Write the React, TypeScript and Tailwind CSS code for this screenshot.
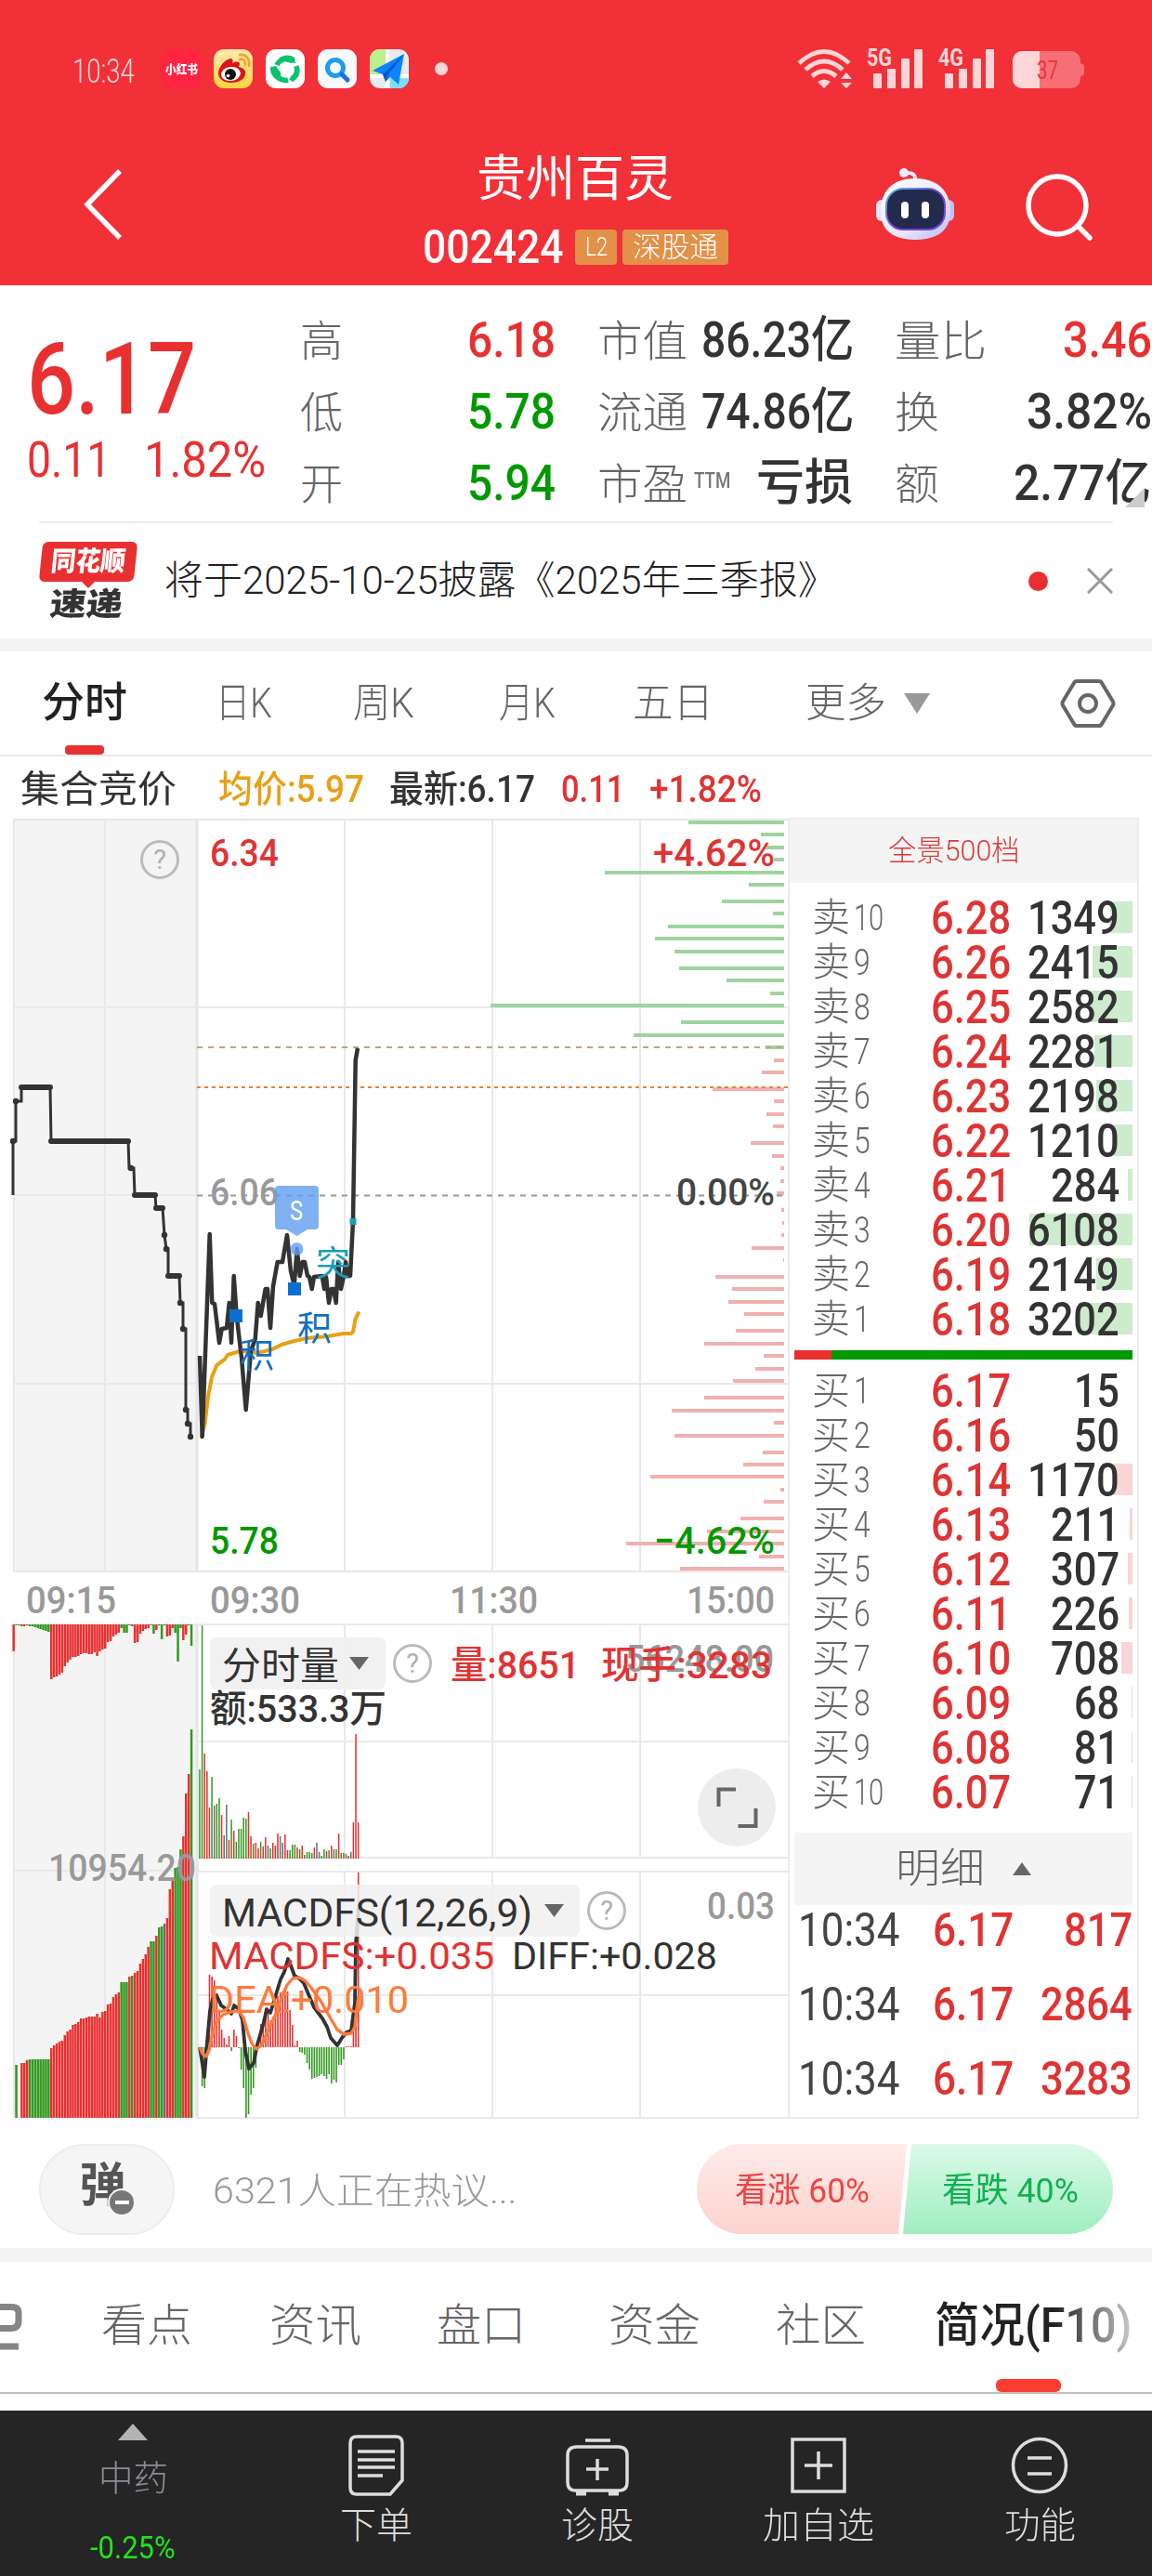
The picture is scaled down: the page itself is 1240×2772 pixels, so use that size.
import React, { useLayoutEffect, useRef, useState } from "react";

// squeezes its text to the width of the box
const Fit = ({ className, children }: { className: string; children: React.ReactNode }) => {
  const box = useRef<HTMLSpanElement>(null);
  const text = useRef<HTMLSpanElement>(null);
  const [scale, setScale] = useState(1);
  useLayoutEffect(() => {
    if (box.current && text.current) {
      setScale(box.current.clientWidth / text.current.offsetWidth);
    }
  }, [children]);
  return (
    <span ref={box} className={`flex shrink-0 leading-none ${className}`}>
      <span
        ref={text}
        className="shrink-0 origin-left whitespace-nowrap"
        style={{ transform: `scaleX(${scale})` }}
      >
        {children}
      </span>
    </span>
  );
};

const StatusBar = () => (
  <div className="flex h-[148px] items-center pl-[78px]">
    <Fit className="w-[67px] text-[37px] font-light text-[#fcd5d7] pt-1">10:34</Fit>
    <div className="ml-[29px] flex gap-[14px]">
      <div className="flex h-[42px] w-[42px] items-center justify-center rounded-xl bg-[#ff2442]">
        <Fit className="w-[35px] text-[13px] font-black text-white">小红书</Fit>
      </div>
      <svg className="h-[42px] w-[42px]" viewBox="0 0 42 42">
        <defs>
          <linearGradient id="wb" x1="0" y1="0" x2="0" y2="1">
            <stop offset="0" stopColor="#ffe9b0" />
            <stop offset="1" stopColor="#ffd23c" />
          </linearGradient>
        </defs>
        <rect width="42" height="42" rx="11" fill="url(#wb)" />
        <path d="M5 26C5 19 12 11 18 10c3 0 3 3 2 5 4-2 8-2 8 1l-1 3c5 1 8 4 7 8-1 6-8 9-15 9C11 36 5 32 5 26z" fill="#dd1416" />
        <ellipse cx="18.500" cy="26.500" rx="10.500" ry="7.500" fill="#fff" transform="rotate(-8 18.500 26.500)" />
        <circle cx="18" cy="27" r="6" fill="#111" />
        <circle cx="15.500" cy="28.500" r="1.800" fill="#fff" />
        <path d="M28 11c4-1 6 2 6 6M28 6c7-1 11 4 10 12" fill="none" stroke="#f0a52c" strokeWidth="2.600" strokeLinecap="round" />
      </svg>
      <svg className="h-[42px] w-[42px]" viewBox="0 0 42 42">
        <rect width="42" height="42" rx="11" fill="#fff" />
        <g fill="none" stroke="#0ac36f" strokeWidth="5.500">
          <path d="M12 17A11 11 0 0 1 29 13" />
          <path d="M33 18A12.500 12.500 0 0 1 28 32" />
          <path d="M24 33A12 12 0 0 1 9 22" />
        </g>
        <g fill="#0ac36f">
          <path d="M14 10C18 6 26 5 31 9l1 6-8-1zM36 19c2 6-1 13-7 16l-4-3 6-5zM5 19l6-1 5 7 1 9C9 33 4 26 5 19z" />
        </g>
      </svg>
      <svg className="h-[42px] w-[42px]" viewBox="0 0 42 42">
        <rect width="42" height="42" rx="11" fill="#f8f9fb" />
        <circle cx="19" cy="20" r="8.500" fill="none" stroke="#1e9bf5" strokeWidth="5" />
        <path d="M26 27l6 6" stroke="#1a6fe8" strokeWidth="5" strokeLinecap="round" />
      </svg>
      <svg className="h-[42px] w-[42px]" viewBox="0 0 42 42">
        <defs>
          <clipPath id="map">
            <rect width="42" height="42" rx="11" />
          </clipPath>
        </defs>
        <g clipPath="url(#map)">
          <rect width="42" height="42" fill="#e6ecef" />
          <path d="M0 0h17v27H0z" fill="#bdf08d" />
          <path d="M22 31h20v11H22z" fill="#7fdcff" />
          <path d="M17 0h4v42h-4zM0 27h42v4H0z" fill="#fff" />
          <path d="M37 5L3 23l11 4 3 8 5-5 9 8z" fill="#0a84ff" />
          <path d="M37 5L14 27l3 8 3-8z" fill="#0058c8" />
        </g>
      </svg>
    </div>
    <div className="ml-[28px] h-[14px] w-[14px] rounded-full bg-[#fcd5d7]" />
    <svg className="ml-[376px] h-[60px] w-[310px]" viewBox="858 44 310 60">
      <g fill="none" stroke="#fcd5d7" strokeWidth="5">
        <path d="M860 68Q887 43 914 68" />
        <path d="M867 75Q887 57 907 75" />
        <path d="M874 82Q887 71 900 82" />
      </g>
      <g fill="#fcd5d7">
        <path d="M880 88q7-5 14 0l-7 7zM905 85l6-7 6 7zM905 89h12l-6 6z" />
        <rect x="940" y="79" width="9" height="16" rx="1" />
        <rect x="955" y="74" width="9" height="21" rx="1" />
        <rect x="970" y="63" width="9" height="32" rx="1" />
        <rect x="984" y="53" width="9" height="42" rx="1" />
        <rect x="1017" y="79" width="9" height="16" rx="1" />
        <rect x="1032" y="74" width="9" height="21" rx="1" />
        <rect x="1047" y="63" width="9" height="32" rx="1" />
        <rect x="1061" y="53" width="9" height="42" rx="1" />
        <text x="933" y="71" textLength="27" lengthAdjust="spacingAndGlyphs" fontSize="26" fontWeight="700">5G</text>
        <text x="1010" y="71" textLength="27" lengthAdjust="spacingAndGlyphs" fontSize="26" fontWeight="700">4G</text>
      </g>
      <rect x="1090" y="55" width="73" height="40" rx="10" fill="#f76f75" />
      <path d="M1163 68q4 1 4 4v6q0 4-4 4z" fill="#f76f75" />
      <path d="M1119 55h-19a10 10 0 0 0-10 10v20a10 10 0 0 0 10 10h19z" fill="#fcd5d7" />
      <text x="1116" y="85" textLength="23" lengthAdjust="spacingAndGlyphs" fontSize="28" fill="#e8363e">37</text>
    </svg>
  </div>
);

const Header = () => (
  <div className="flex h-[159px]">
    <svg className="ml-[86px] mt-[33px] h-[80px] w-[48px]" viewBox="0 0 48 80" fill="none" stroke="#fff" strokeWidth="5.500">
      <path d="M43 3L8 39l35 36" />
    </svg>
    <div className="ml-[323px] w-[328px]">
      <Fit className="ml-[56px] mt-[19px] w-[212px] text-[53px] text-white">贵州百灵</Fit>
      <div className="mt-[21px] flex items-center">
        <Fit className="-ml-[2px] h-[50px] w-[152px] text-[50px] font-medium text-white">002424</Fit>
        <div className="ml-[12px] flex h-[38px] w-[45px] items-center justify-center rounded bg-[#e39048]">
          <Fit className="w-[24px] text-[28px] font-light text-white">L2</Fit>
        </div>
        <div className="ml-[6px] flex h-[38px] w-[114px] items-center justify-center rounded bg-[#e39048]">
          <Fit className="w-[92px] text-[30px] font-light text-white">深股通</Fit>
        </div>
      </div>
    </div>
    <svg className="ml-[155px] mt-[30px] h-[84px] w-[90px]" viewBox="940 178 90 84">
      <defs>
        <linearGradient id="face" x1="0" y1="0" x2="1" y2="1">
          <stop offset="0" stopColor="#fff" />
          <stop offset="0.600" stopColor="#e9e8fb" />
          <stop offset="1" stopColor="#b9b8ee" />
        </linearGradient>
        <linearGradient id="rim" x1="0" y1="0" x2="1" y2="1">
          <stop offset="0" stopColor="#5fc4e8" />
          <stop offset="0.500" stopColor="#7a3fd8" />
          <stop offset="1" stopColor="#6a4be0" />
        </linearGradient>
      </defs>
      <path d="M974 186q13-1 11 9" fill="none" stroke="#e4e4f6" strokeWidth="4" />
      <circle cx="973" cy="186" r="5" fill="#eeeefa" />
      <rect x="943" y="215" width="14" height="23" rx="6" fill="#e2e2f8" />
      <rect x="1013" y="215" width="14" height="23" rx="6" fill="#c3c2ee" />
      <path d="M948 228c0-24 14-36 37-36s38 12 38 36c0 21-16 30-38 30s-37-9-37-30z" fill="url(#face)" />
      <rect x="954" y="203" width="63" height="44" rx="18" fill="#232b4c" stroke="url(#rim)" strokeWidth="2" />
      <rect x="970" y="217" width="8" height="18" rx="4" fill="#fff" />
      <rect x="992" y="217" width="8" height="18" rx="4" fill="#fff" />
    </svg>
    <svg className="ml-[72px] mt-[34px] h-[80px] w-[80px]" viewBox="1104 182 80 80" fill="none" stroke="#fff" strokeWidth="5.500">
      <circle cx="1140" cy="221" r="31" />
      <path d="M1162 243l13 13" strokeLinecap="round" />
    </svg>
  </div>
);

const Quote = () => (
  <div className="flex h-[254px] pt-[21px]">
    <div className="w-[323px] pl-[29px]">
      <Fit className="mt-[27px] w-[182px] text-[107px] font-medium text-[#e93030]">6.17</Fit>
      <div className="mt-[7px] flex">
        <Fit className="w-[90px] text-[53px] text-[#e93030]">0.11</Fit>
        <Fit className="ml-[36px] w-[131px] text-[53px] text-[#e93030]">1.82%</Fit>
      </div>
    </div>
    <div className="w-[320px] text-[53px] font-medium text-[#009900]">
      <div className="flex h-[77px] items-center">
        <Fit className="w-[46px] text-[46px] font-light text-[#666]">高</Fit>
        <Fit className="ml-[134px] w-[95px] text-[#e93030]">6.18</Fit>
      </div>
      <div className="flex h-[77px] items-center">
        <Fit className="w-[46px] text-[46px] font-light text-[#666]">低</Fit>
        <Fit className="ml-[134px] w-[95px]">5.78</Fit>
      </div>
      <div className="flex h-[77px] items-center">
        <Fit className="w-[46px] text-[46px] font-light text-[#666]">开</Fit>
        <Fit className="ml-[134px] w-[95px]">5.94</Fit>
      </div>
    </div>
    <div className="w-[320px] text-[53px] font-medium text-[#333]">
      <div className="flex h-[77px] items-center">
        <Fit className="w-[97px] text-[46px] font-light text-[#666]">市值</Fit>
        <Fit className="ml-[15px] w-[164px]">86.23亿</Fit>
      </div>
      <div className="flex h-[77px] items-center">
        <Fit className="w-[97px] text-[46px] font-light text-[#666]">流通</Fit>
        <Fit className="ml-[15px] w-[164px]">74.86亿</Fit>
      </div>
      <div className="flex h-[77px] items-center">
        <Fit className="w-[97px] text-[46px] font-light text-[#666]">市盈</Fit>
        <Fit className="mb-2 ml-[7px] w-[39px] text-[24px] text-[#777]">TTM</Fit>
        <Fit className="ml-[28px] w-[104px] text-[53px]">亏损</Fit>
      </div>
    </div>
    <div className="relative w-[277px] text-[53px] font-medium text-[#333]">
      <div className="flex h-[77px] items-center">
        <Fit className="w-[99px] text-[46px] font-light text-[#666]">量比</Fit>
        <Fit className="ml-[82px] w-[96px] text-[#e93030]">3.46</Fit>
      </div>
      <div className="flex h-[77px] items-center">
        <Fit className="w-[48px] text-[46px] font-light text-[#666]">换</Fit>
        <Fit className="ml-[94px] w-[135px]">3.82%</Fit>
      </div>
      <div className="flex h-[77px] items-center">
        <Fit className="w-[48px] text-[46px] font-light text-[#666]">额</Fit>
        <Fit className="ml-[80px] w-[148px]">2.77亿</Fit>
      </div>
      <svg className="absolute bottom-[15px] right-[8px] h-[21px] w-[21px]" viewBox="0 0 21 21">
        <path d="M21 0v21H0z" fill="#ccc" />
      </svg>
    </div>
  </div>
);

const News = () => (
  <div className="mx-[42px] flex h-[126px] items-center border-t-2 border-[#ebebeb]">
    <div className="w-[104px] pl-[2px]">
      <div className="flex h-[43px] -skew-x-6 items-center justify-center rounded-md bg-[#e93030]">
        <Fit className="w-[80px] text-[29px] font-black text-white">同花顺</Fit>
      </div>
      <svg className="mx-auto h-[7px] w-[14px]" viewBox="0 0 14 7">
        <path d="M0 0h14L7 7z" fill="#e93030" />
      </svg>
      <Fit className="ml-[10px] w-[78px] -skew-x-6 text-[34px] font-black text-[#333]">速递</Fit>
    </div>
    <Fit className="ml-[31px] w-[724px] text-[42px] font-light text-[#222]">将于2025-10-25披露《2025年三季报》</Fit>
    <div className="ml-[206px] h-[21px] w-[21px] rounded-full bg-[#e93030]" />
    <svg className="ml-[42px] h-[28px] w-[28px]" viewBox="0 0 28 28" stroke="#999" strokeWidth="3">
      <path d="M1 1l26 26M27 1L1 27" />
    </svg>
  </div>
);

const PeriodTabs = () => (
  <div className="flex h-[113px] border-b-2 border-[#e8e8e8] pl-[45px] text-[44px] font-light text-[#666]">
    <div className="flex flex-col">
      <Fit className="mt-[33px] h-[68px] w-[92px] text-[45px] font-medium text-[#222]">分时</Fit>
      <div className="ml-[25px] h-[10px] w-[42px] rounded bg-[#e93030]" />
    </div>
    <Fit className="ml-[95px] mt-[34px] w-[61px]">日K</Fit>
    <Fit className="ml-[87px] mt-[34px] w-[66px]">周K</Fit>
    <Fit className="ml-[91px] mt-[34px] w-[61px]">月K</Fit>
    <Fit className="ml-[83px] mt-[34px] w-[87px]">五日</Fit>
    <Fit className="ml-[99px] mt-[34px] w-[87px]">更多</Fit>
    <svg className="ml-[19px] mt-[45px] h-[22px] w-[28px]" viewBox="0 0 28 22">
      <path d="M0 0h28L14 22z" fill="#999" />
    </svg>
    <svg className="ml-[140px] mt-[29px] h-[54px] w-[60px]" viewBox="0 0 60 54" fill="none" stroke="#666" strokeWidth="4">
      <path d="M18 3h24q2 0 3 2l12 20q1 2 0 4L45 49q-1 2-3 2H18q-2 0-3-2L3 29q-1-2 0-4L15 5q1-2 3-2z" />
      <circle cx="30" cy="27" r="9" />
    </svg>
  </div>
);

const PriceInfo = () => (
  <div className="flex h-[66px] items-center pl-[22px] pt-[5px] text-[40px] text-[#333]">
    <Fit className="w-[168px]">集合竞价</Fit>
    <Fit className="ml-[45px] w-[157px] font-medium text-[#e8a016]">均价:5.97</Fit>
    <Fit className="ml-[27px] w-[157px] font-medium">最新:6.17</Fit>
    <Fit className="ml-[28px] w-[68px] font-medium text-[#e03333]">0.11</Fit>
    <Fit className="ml-[27px] w-[121px] font-medium text-[#e03333]">+1.82%</Fit>
  </div>
);

const RED = "#e83030";
const GREEN = "#339922";
const GRAY = "#6b6b73";
const colors: any = { r: RED, g: GREEN, k: GRAY };

// [y, left end] of every resting order
const asks = [
  [884, 741], [897, 819], [911, 824], [924, 833], [938, 651], [951, 806], [969, 777], [982, 832], [996, 719],
  [1009, 705], [1023, 726], [1041, 731], [1054, 782], [1068, 829], [1081, 528], [1099, 733], [1113, 682], [1126, 824],
];
const bids = [
  [1140, 833], [1153, 820], [1171, 767], [1184, 833], [1198, 825], [1211, 832], [1229, 808], [1243, 831], [1256, 840],
  [1270, 840], [1283, 836], [1301, 841], [1315, 842], [1328, 841], [1342, 809], [1355, 843], [1373, 770], [1386, 788],
  [1400, 784], [1413, 801], [1431, 792], [1445, 758], [1458, 822], [1472, 813], [1485, 789], [1503, 758], [1517, 723],
  [1530, 833], [1544, 726], [1562, 821], [1575, 800], [1588, 700], [1602, 840], [1615, 822], [1633, 797], [1647, 761],
  [1660, 674], [1674, 817], [1687, 732],
];

const auctionPoints =
  "14,1285 14,1227 17,1227 17,1184 23,1184 23,1169 54,1169 55,1227 138,1227 139,1256 144,1256 145,1285 167,1285 168,1299 175,1299 177,1328 179,1343 181,1343 181,1372 193,1372 194,1401 197,1401 197,1429 200,1429 200,1516 202,1516 202,1531 205,1531 205,1545";
const auctionDots = [
  [14, 1227], [17, 1184], [141, 1256], [177, 1328], [179, 1343], [194, 1401], [197, 1429], [200, 1516], [202, 1531], [205, 1545],
];
const pricePoints =
  "215,1458 217.7,1545 225.7,1327 228.3,1401 231,1402 236,1444 238.7,1429 244,1428 246.7,1401 249,1444 251.7,1372 254.7,1415 260,1460 264.7,1516 270,1453 274.7,1440 277.7,1401 280.7,1415 285.7,1386 288,1386 291,1428 294,1383 298.7,1357 304,1357 309,1328 313,1367 316.7,1382 319.7,1343 322.7,1372 325.7,1357 328,1357 331,1372 333,1373 335.7,1386 338,1373 346.7,1372 349,1386 351,1373 354,1401 356.7,1386 359,1386 361.7,1401 364,1357 367,1386 370,1372 372,1357 374.7,1372 377,1372 380,1313 382.7,1140 385,1127";
const avgPoints =
  "217,1545 220.7,1530 224.3,1500 228.3,1480 233.3,1468 241.7,1462 245,1457 255,1454 260,1452 267,1454 276.7,1455 293,1451 303,1446 313,1443 330,1439 353,1437 370,1434 378,1434 380,1432 382.7,1418 385.7,1412";
const diffPoints =
  "215,2202 220,2234 223,2196 226,2163 229,2150 233,2146 238,2157 245,2162 249,2166 252,2157 257,2161 261,2173 264,2206 268,2225 273,2219 277,2199 284,2175 287,2161 291,2165 295,2152 302,2129 306,2121 310,2107 313,2114 317,2125 322,2128 327,2133 332,2145 338,2159 347,2171 352,2180 356,2192 363,2200 368,2192 373,2186 378,2184 382,2154 383,2091 386,2052";
const deaPoints =
  "215,2202 218,2209 222,2212 225,2205 228,2191 233,2175 240,2167 248,2164 257,2163 262,2170 266,2184 271,2198 276,2204 282,2199 288,2185 297,2166 303,2149 309,2135 315,2128 322,2127 328,2130 335,2138 345,2152 357,2173 363,2183 370,2188 378,2187 382,2180 384,2161 386,2147";

const unmatched =
  "r29 g1 g1 r2 r2 r1 g2 g2 g3 g4 g5 g6 g7 g8 r59 r57 r56 r54 r52 r45 r41 r38 r35 r35 r34 r32 r31 r31 r32 r32 r30 r34 r29 r27 r26 r19 r18 r13 r11 r9 g4 g9 g9 r1 g2 r20 r19 r10 r7 r5 r4 g1 g10 r6 g1 g16 r1 r13 r12 r4 g9 g40 g4 r17 r11 g1 g23";
const matched =
  "g0 g57 r0 r59 r59 r62 g63 g63 g63 g63 g63 g63 g63 g63 r75 r78 r80 r82 r83 r89 r93 r95 r100 r101 r103 r107 r107 r108 r109 r109 r109 r112 r108 r114 r115 r122 r123 r130 r133 r135 g146 g146 g146 r152 g153 r156 r158 r166 r171 r176 r184 g190 g190 r196 g205 g206 k209 r215 r246 r255 g269 g270 g289 r303 r349 r370 g418";
const volume =
  "g96 g251 r113 r94 r55 g88 k57 g59 g65 r47 k25 k58 r20 g42 r30 g18 g32 g32 g44 g43 r50 r24 g16 r17 r11 g18 r13 r23 k14 g11 r17 r14 r27 k24 k17 r26 r9 g9 g15 g15 r12 g10 r14 k4 g7 g7 g6 r12 k17 k7 g3 g10 r8 g9 r14 k10 g10 r27 g6 r6 g5 r3 k7 r39 r134 r39";
const macd = [
  0, -42, -44, 1, 78, 76, 72, 58, 40, 19, 10, 3, 12, -4, 19, 12, -1, -24, -44, -76, -72, -51, -44, -22, 6, 25, 30, 38,
  37, 29, 33, 45, 55, 59, 60, 62, 60, 40, 24, 2, 7, -5, -6, -8, -17, -24, -34, -33, -32, -31, -29, -31, -34, -29, -39,
  -35, -38, -19, -19, -13, 1, 1, 1, 40, 90, 188,
];

const parse = (s: string) => s.split(" ").map((v) => ({ fill: colors[v[0]], h: Number(v.slice(1)) }));

type LabelProps = { x: number; y: number; w: number; size?: number; fill: string; weight?: number; children: string };
const Label = ({ x, y, w, size = 41, fill, weight = 500, children }: LabelProps) => (
  <text x={x} y={y} textLength={w} lengthAdjust="spacingAndGlyphs" fontSize={size} fontWeight={weight} fill={fill}>
    {children}
  </text>
);

const Help = ({ x, y }: { x: number; y: number }) => (
  <g>
    <circle cx={x} cy={y} r="19.500" fill="none" stroke="#bbb" strokeWidth="3" />
    <text x={x} y={y + 10} textAnchor="middle" fontSize="29" fill="#b0b0b0">?</text>
  </g>
);

const Chart = () => (
  <svg className="h-[1401px] w-[848px] shrink-0" viewBox="0 879 848 1401">
    <rect x="15" y="881" width="195" height="809" fill="#f4f4f4" />
    <rect x="15" y="1747" width="195" height="531" fill="#f4f4f4" />
    <g stroke="#e9e9e9" strokeWidth="2" fill="none">
      <path d="M15 881V1690M113 881V1690M371 881V1690M530 881V1690M689 881V1690" />
      <path d="M15 1083H848M15 1488H848M15 1285H212" />
      <path d="M14 881H848M14 1690H848" strokeWidth="2.500" />
      <path d="M212 881V1690M212 1747V2278" stroke="#e6e6e6" strokeWidth="3.500" />
      <path d="M15 1747V2278M113 1747V2278M371 1747V1998M530 1747V1998M689 1747V1998M371 2013V2278M530 2013V2278M689 2013V2278" />
      <path d="M14 1747H848M212 1873H848M212 1998H848M15 2012H212M212 2013H848M212 2146H848M212 2278H848" />
    </g>

    {asks.map(([y, x]) => (
      <rect key={y} x={x} y={y - 2} width={844 - x} height="4" fill="#9fd49f" />
    ))}
    {bids.map(([y, x]) => (
      <rect key={y} x={x} y={y - 2} width={844 - x} height="4" fill="#f1b0b0" />
    ))}
    <path d="M212 1126H844" stroke="#b8a880" strokeWidth="2" strokeDasharray="6 6" />
    <path d="M212 1169H848" stroke="#ee8030" strokeWidth="2" strokeDasharray="4 4" />
    <path d="M212 1285.500H844" stroke="#999" strokeWidth="2" strokeDasharray="6 6" />

    <Label x={226} y={1296} w={74} fill="#999">6.06</Label>
    <Label x={728} y={1296} w={106} fill="#444">0.00%</Label>

    <polyline points={auctionPoints} fill="none" stroke="#333" strokeWidth="3" />
    <path d="M23 1169H54M55 1227H138M145 1285H167M168 1299H175M181 1372H193" stroke="#333" strokeWidth="6" strokeLinecap="round" />
    {auctionDots.map(([x, y]) => (
      <circle key={y} cx={x} cy={y} r="3.200" fill="#333" />
    ))}
    <polyline points={avgPoints} fill="none" stroke="#e8a016" strokeWidth="4" strokeLinejoin="round" strokeLinecap="round" />
    <polyline points={pricePoints} fill="none" stroke="#333" strokeWidth="4.500" strokeLinejoin="round" />

    <rect x="247" y="1408" width="14" height="14" fill="#0a70cf" />
    <rect x="310" y="1379" width="14" height="14" fill="#0a70cf" />
    <rect x="376.500" y="1310" width="7" height="7" fill="#1a9cb8" />
    <g fill="#5f9df0" fillOpacity="0.800">
      <path d="M300 1275h39q4 0 4 4v39q0 4-4 4h-8l-11.500 7-11.500-7h-8q-4 0-4-4v-39q0-4 4-4z" />
      <circle cx="319.500" cy="1343" r="7" />
    </g>
    <Label x={312} y={1312} w={14} size={29} weight={400} fill="#fff">S</Label>
    <g fontSize="37" fontWeight="400">
      <text x="258" y="1471" fill="#1070c0">积</text>
      <text x="320" y="1442" fill="#1070c0">积</text>
      <text x="340" y="1372" fill="#1a9cb8">突</text>
    </g>

    <Label x={226} y={931} w={74} fill="#e03333">6.34</Label>
    <Label x={703} y={931} w={131} fill="#e03333">+4.62%</Label>
    <Label x={226} y={1671} w={74} fill="#009900">5.78</Label>
    <Label x={704} y={1671} w={130} fill="#009900">−4.62%</Label>
    <Help x={172} y={924} />

    <Label x={28} y={1735} w={97} fill="#999">09:15</Label>
    <Label x={226} y={1735} w={97} fill="#999">09:30</Label>
    <Label x={484} y={1735} w={95} fill="#999">11:30</Label>
    <Label x={739} y={1735} w={95} fill="#999">15:00</Label>

    {parse(unmatched).map((b, i) => (
      <rect key={i} x={13.4 + i * 2.9} y="1747" width="2.500" height={b.h} fill={b.fill} />
    ))}
    {parse(matched).map((b, i) => (
      <rect key={i} x={13.4 + i * 2.9} y={2278 - b.h} width="2.500" height={b.h} fill={b.fill} />
    ))}
    <Label x={52} y={2023} w={159} fill="#999">10954.20</Label>

    {parse(volume).map((b, i) => (
      <rect key={i} x={214.2 + i * 2.626} y={1999 - b.h} width="1.500" height={b.h} fill={b.fill} />
    ))}
    <rect x="226" y="1761" width="189" height="56" rx="7" fill="#f0f0f0" fillOpacity="0.920" />
    <Label x={239} y={1806} w={126} fill="#333" weight={400}>分时量</Label>
    <path d="M376 1782h21l-10.500 14z" fill="#666" />
    <Help x={444} y={1789} />
    <Label x={673} y={1798} w={160} fill="#999">56248.00</Label>
    <Label x={485} y={1805} w={139} fill="#e03333">量:8651</Label>
    <Label x={647} y={1805} w={184} fill="#e03333">现手:3283</Label>
    <Label x={226} y={1852} w={190} fill="#333">额:533.3万</Label>
    <circle cx="793" cy="1944" r="42" fill="#ededed" />
    <path d="M792 1924.500H773.500V1943M794.500 1964H813.500V1945" fill="none" stroke="#666" strokeWidth="4" />

    {macd.map((h, i) => (
      <rect
        key={i}
        x={214.2 + i * 2.626}
        y={h > 0 ? 2202 - h : 2202}
        width="1.600"
        height={Math.abs(h)}
        fill={h > 0 ? RED : GREEN}
      />
    ))}
    <polyline points={diffPoints} fill="none" stroke="#333" strokeWidth="3.800" strokeLinejoin="round" />
    <polyline points={deaPoints} fill="none" stroke="#ff7a3c" strokeWidth="3.400" strokeLinejoin="round" />
    <rect x="226" y="2027" width="398" height="56" rx="7" fill="#f0f0f0" fillOpacity="0.850" />
    <Label x={239} y={2072} w={334} size={43} fill="#333" weight={400}>MACDFS(12,26,9)</Label>
    <path d="M586 2048h21l-10.500 14z" fill="#666" />
    <Help x={653} y={2055} />
    <Label x={761} y={2064} w={73} fill="#999">0.03</Label>
    <Label x={225} y={2118} w={307} weight={400} fill="#e03333">MACDFS:+0.035</Label>
    <Label x={551} y={2118} w={221} weight={400} fill="#333">DIFF:+0.028</Label>
    <Label x={225} y={2165} w={215} weight={400} fill="#ff7a3c">DEA:+0.010</Label>
  </svg>
);

const sells = [
  ["10", "6.28", "1349", 24],
  ["9", "6.26", "2415", 43],
  ["8", "6.25", "2582", 45],
  ["7", "6.24", "2281", 41],
  ["6", "6.23", "2198", 39],
  ["5", "6.22", "1210", 20],
  ["4", "6.21", "284", 5],
  ["3", "6.20", "6108", 111],
  ["2", "6.19", "2149", 39],
  ["1", "6.18", "3202", 58],
];
const buys = [
  ["1", "6.17", "15", 0],
  ["2", "6.16", "50", 0],
  ["3", "6.14", "1170", 21],
  ["4", "6.13", "211", 3],
  ["5", "6.12", "307", 5],
  ["6", "6.11", "226", 4],
  ["7", "6.10", "708", 12],
  ["8", "6.09", "68", 1],
  ["9", "6.08", "81", 1],
  ["10", "6.07", "71", 1],
];
const ticks = [
  ["10:34", "6.17", "817"],
  ["10:34", "6.17", "2864"],
  ["10:34", "6.17", "3283"],
];

const qtyWidth: any = { 2: "w-[49px]", 3: "w-[74px]", 4: "w-[99px]" };

const Level = ({ side, row, bar }: { side: string; row: any[]; bar: string }) => (
  <div className="relative flex h-[48px] items-center pl-[24px] text-[50px] font-medium">
    <div className={`absolute right-[5px] top-[6px] h-[34px] ${bar}`} style={{ width: row[3] }} />
    <Fit className="w-[41px] text-[42px] font-light text-[#666]">{side}</Fit>
    <Fit className={`ml-[4px] text-[39px] font-light text-[#666] ${row[0] === "10" ? "w-[32px]" : "w-[18px]"}`}>{row[0]}</Fit>
    <div className={row[0] === "10" ? "ml-[51px]" : "ml-[65px]"}>
      <Fit className="w-[86px] text-[#e03333]">{row[1]}</Fit>
    </div>
    <div className="relative ml-auto mr-[19px]">
      <Fit className={`text-[#333] ${qtyWidth[row[2].length]}`}>{row[2]}</Fit>
    </div>
  </div>
);

const OrderBook = () => (
  <div className="h-[1400px] w-[378px] border-2 border-t border-[#ececec]">
    <div className="flex h-[69px] items-center bg-[#f4f4f4] pl-[106px]">
      <Fit className="w-[142px] text-[31px] font-light text-[#d83a3a]">全景500档</Fit>
    </div>
    <div className="mt-[14px]">
      {sells.map((row) => (
        <Level key={row[0]} side="卖" row={row} bar="bg-[#cdebcd]" />
      ))}
    </div>
    <div className="ml-[5px] mr-[5px] mt-[9px] flex h-[10px] bg-[#009900]">
      <div className="w-[40px] bg-[#e93030]" />
    </div>
    <div className="mt-[10px]">
      {buys.map((row) => (
        <Level key={row[0]} side="买" row={row} bar="bg-[#f9d5d5]" />
      ))}
    </div>
    <div className="mx-[5px] mt-[19px] flex h-[78px] items-center bg-[#f4f4f4] pl-[109px]">
      <Fit className="w-[96px] text-[44px] font-light text-[#666]">明细</Fit>
      <svg className="ml-[30px] h-[14px] w-[20px]" viewBox="0 0 20 14">
        <path d="M10 0l10 14H0z" fill="#666" />
      </svg>
    </div>
    <div className="-mt-[13px]">
      {ticks.map((t, i) => (
        <div key={i} className="flex h-[80px] items-center pl-[9px] pr-[5px] text-[50px] font-medium text-[#e03333]">
          <Fit className="w-[110px] font-normal text-[#444]">{t[0]}</Fit>
          <Fit className="ml-[35px] w-[87px]">{t[1]}</Fit>
          <div className="ml-auto">
            <Fit className={qtyWidth[t[2].length]}>{t[2]}</Fit>
          </div>
        </div>
      ))}
    </div>
  </div>
);

const Comments = () => (
  <div className="flex h-[139px] items-start pl-[42px] pt-[27px]">
    <div className="relative flex h-[98px] w-[146px] items-center justify-center rounded-full border-2 border-[#ededed] bg-[#f5f5f5]">
      <Fit className="mb-2 mr-[9px] w-[50px] text-[50px] font-bold text-[#555]">弹</Fit>
      <div className="absolute left-[72px] top-[46px] flex h-[30px] w-[30px] items-center justify-center rounded-full border-2 border-[#f5f5f5] bg-[#777]">
        <div className="h-[4px] w-[15px] bg-white" />
      </div>
    </div>
    <Fit className="ml-[41px] mt-[32px] w-[328px] text-[39px] font-light text-[#999]">6321人正在热议...</Fit>
    <div className="relative ml-[193px] h-[97px] w-[448px]">
      <svg className="absolute inset-0 h-[97px] w-[448px]" viewBox="0 0 448 97">
        <defs>
          <linearGradient id="up" x1="0" y1="0" x2="0" y2="1">
            <stop offset="0" stopColor="#feecea" />
            <stop offset="1" stopColor="#fdd3ce" />
          </linearGradient>
          <linearGradient id="down" x1="0" y1="0" x2="0" y2="1">
            <stop offset="0" stopColor="#dbfae8" />
            <stop offset="1" stopColor="#9fedc0" />
          </linearGradient>
        </defs>
        <path d="M48.500 0H226L217 97H48.500A48.500 48.500 0 0 1 48.500 0z" fill="url(#up)" />
        <path d="M231 0H399.500A48.500 48.500 0 0 1 399.500 97H222z" fill="url(#down)" />
      </svg>
      <div className="relative flex h-[97px] items-center pl-[41px] pt-[4px]">
        <Fit className="w-[145px] text-[37px] text-[#ee4444]">看涨 60%</Fit>
        <Fit className="ml-[78px] w-[147px] text-[37px] text-[#12b052]">看跌 40%</Fit>
      </div>
    </div>
  </div>
);

const InfoTabs = () => (
  <div className="flex h-[142px] border-b-2 border-[#bfbfbf] text-[48px] font-light text-[#666]">
    <svg className="mt-[44px] h-[52px] w-[26px]" viewBox="0 0 26 52" fill="none" stroke="#858585" strokeWidth="7">
      <path d="M-4 4.500h17q7 0 7 7v8q0 8-9 8H-4M-4 47h24" />
    </svg>
    <Fit className="ml-[83px] mt-[45px] w-[98px]">看点</Fit>
    <Fit className="ml-[83px] mt-[45px] w-[99px]">资讯</Fit>
    <Fit className="ml-[81px] mt-[45px] w-[96px]">盘口</Fit>
    <Fit className="ml-[89px] mt-[45px] w-[99px]">资金</Fit>
    <Fit className="ml-[81px] mt-[45px] w-[97px]">社区</Fit>
    <div className="ml-[74px]">
      <Fit className="mt-[43px] h-[83px] w-[213px] text-[51px]">
        <span className="bg-gradient-to-r from-[#222] from-60% to-[#ccc] bg-clip-text font-medium text-transparent">
          简况(F10)
        </span>
      </Fit>
      <div className="ml-[66px] h-[14px] w-[70px] rounded-md bg-[#fc3c30]" />
    </div>
  </div>
);

const BottomBar = () => (
  <div className="flex h-[179px] bg-[#252525] text-[39px] font-light text-[#ddd]">
    <div className="flex w-[286px] flex-col items-center">
      <svg className="mt-[14px] h-[18px] w-[32px]" viewBox="0 0 32 18">
        <path d="M16 0l16 18H0z" fill="#b3b3b3" />
      </svg>
      <Fit className="mt-[22px] w-[75px] text-[38px] text-[#8c8c98]">中药</Fit>
      <Fit className="mt-[38px] w-[92px] text-[34px] font-normal text-[#1ee51e]">-0.25%</Fit>
    </div>
    <div className="flex w-[238px] flex-col items-center">
      <svg className="mt-[26px] h-[66px] w-[60px]" viewBox="0 0 60 66" fill="none" stroke="#ddd" strokeWidth="3.500">
        <path d="M9 2h42q7 0 7 7v40L45 64H9q-7 0-7-7V9q0-7 7-7z" />
        <path d="M10 18h40M10 27h40M10 35h40M10 44h27" />
      </svg>
      <Fit className="mt-[13px] w-[78px]">下单</Fit>
    </div>
    <div className="flex w-[238px] flex-col items-center">
      <svg className="mt-[28px] h-[64px] w-[68px]" viewBox="0 0 68 64" fill="none" stroke="#ddd" strokeWidth="3.500">
        <path d="M21 4h27M12 11h44q10 0 10 9v29q0 9-8 9H10q-8 0-8-9V20q0-9 10-9zM34 24v23M22 35h24" />
        <path d="M11 61h11M46 61h11" strokeWidth="5" />
      </svg>
      <Fit className="mt-[13px] w-[78px]">诊股</Fit>
    </div>
    <div className="flex w-[238px] flex-col items-center">
      <svg className="mt-[29px] h-[60px] w-[60px]" viewBox="0 0 60 60" fill="none" stroke="#ddd" strokeWidth="3.500">
        <path d="M2 2h56v56H2zM30 15v30M15 30h30" />
      </svg>
      <Fit className="mt-[16px] w-[120px]">加自选</Fit>
    </div>
    <div className="flex w-[238px] flex-col items-center">
      <svg className="mt-[28px] h-[62px] w-[62px]" viewBox="0 0 62 62" fill="none" stroke="#ddd" strokeWidth="3.500">
        <circle cx="31" cy="31" r="28.500" />
        <path d="M18 23h26M18 40h26" />
      </svg>
      <Fit className="mt-[15px] w-[77px]">功能</Fit>
    </div>
  </div>
);

const App = () => {
  return (
    <div className="h-[2772px] w-[1240px] overflow-hidden bg-white font-['Roboto','Noto_Sans_CJK_SC',sans-serif]">
      <div className="h-[307px] bg-[#f13038]">
        <StatusBar />
        <Header />
      </div>
      <Quote />
      <News />
      <div className="h-[14px] bg-[#f4f4f4]" />
      <PeriodTabs />
      <PriceInfo />
      <div className="flex h-[1400px] items-start">
        <Chart />
        <OrderBook />
      </div>
      <Comments />
      <div className="h-[15px] bg-[#f4f4f4]" />
      <InfoTabs />
      <div className="h-[18px]" />
      <BottomBar />
    </div>
  );
};

export default App;
